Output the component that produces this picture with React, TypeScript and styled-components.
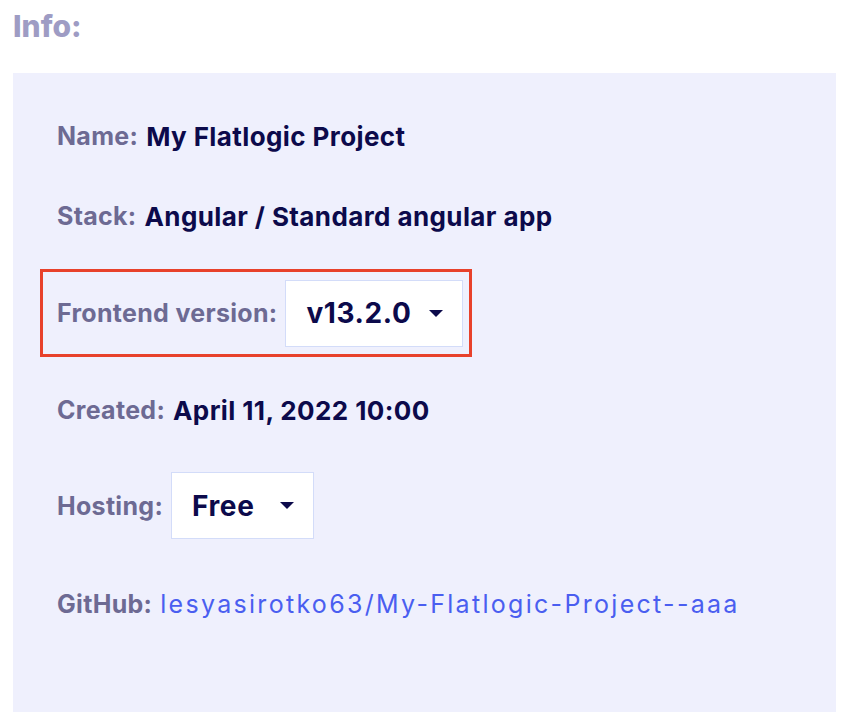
import React from "react";
import styled, { createGlobalStyle } from "styled-components";

const Global = createGlobalStyle`
  html, body { margin: 0; padding: 0; background: #ffffff; }
  body { font-family: Inter, "Noto Sans", sans-serif; }
`;

const Page = styled.div`
  width: 852px;
  height: 728px;
  box-sizing: border-box;
  padding: 8px 16px 16px 13px;
  display: flex;
  flex-direction: column;
`;

const Title = styled.h2`
  margin: 0;
  font-size: 30px;
  line-height: 36px;
  font-weight: 800;
  color: #9e9cc4;
`;

const Panel = styled.div`
  margin-top: 29px;
  width: 823px;
  height: 639px;
  box-sizing: border-box;
  background: #eff0fd;
  padding: 41px 0 0 44px;
  display: flex;
  flex-direction: column;
`;

const Row = styled.div<{ $h: number; $mt: number }>`
  display: flex;
  align-items: center;
  height: ${(p) => p.$h}px;
  margin-top: ${(p) => p.$mt}px;
  gap: 8px;
  white-space: nowrap;
`;

const LinkRow = styled(Row)`
  align-items: baseline;
  padding-top: 6px;
  box-sizing: border-box;
`;

const Highlight = styled.div`
  display: flex;
  align-items: center;
  gap: 8px;
  margin-left: -17px;
  padding: 0 6px 0 14px;
  border: 3px solid #e8412b;
  width: 432px;
  height: 88px;
  box-sizing: border-box;
`;

const Label = styled.span`
  flex-shrink: 0;
  color: #6d6a93;
  font-size: 25px;
  font-weight: 700;
  letter-spacing: 0.3px;
`;

const Value = styled.span`
  flex-shrink: 0;
  color: #0c0a4b;
  font-size: 26px;
  font-weight: 700;
  letter-spacing: 0.4px;
`;

const Select = styled.div<{ $w: number }>`
  flex-shrink: 0;
  width: ${(p) => p.$w}px;
  height: 67px;
  box-sizing: border-box;
  background: #ffffff;
  border: 1px solid #d3dcf9;
  display: flex;
  align-items: center;
  justify-content: space-between;
  padding: 0 19px 0 20px;
  font-size: 28px;
  font-weight: 700;
  letter-spacing: 0.6px;
  color: #0c0a4b;
`;

const Caret = styled.span`
  width: 0;
  height: 0;
  border-left: 7px solid transparent;
  border-right: 7px solid transparent;
  border-top: 7px solid #0c0a4b;
`;

const Link = styled.a`
  color: #4a5ef0;
  font-weight: 400;
  font-size: 25px;
  letter-spacing: 2.3px;
  text-decoration: none;
`;

export default function App() {
  return (
    <>
      <Global />
      <Page>
        <Title>Info:</Title>
        <Panel>
          <Row $h={44} $mt={0}>
            <Label>Name:</Label>
            <Value>My Flatlogic Project</Value>
          </Row>
          <Row $h={44} $mt={36}>
            <Label>Stack:</Label>
            <Value>Angular / Standard angular app</Value>
          </Row>
          <Row $h={88} $mt={31}>
            <Highlight>
              <Label>Frontend version:</Label>
              <Select $w={178}>
                <span>v13.2.0</span>
                <Caret />
              </Select>
            </Highlight>
          </Row>
          <Row $h={44} $mt={31}>
            <Label>Created:</Label>
            <Value>April 11, 2022 10:00</Value>
          </Row>
          <Row $h={67} $mt={40}>
            <Label>Hosting:</Label>
            <Select $w={143}>
              <span>Free</span>
              <Caret />
            </Select>
          </Row>
          <LinkRow $h={44} $mt={44}>
            <Label>GitHub:</Label>
            <Link href="#">lesyasirotko63/My-Flatlogic-Project--aaa</Link>
          </LinkRow>
        </Panel>
      </Page>
    </>
  );
}
